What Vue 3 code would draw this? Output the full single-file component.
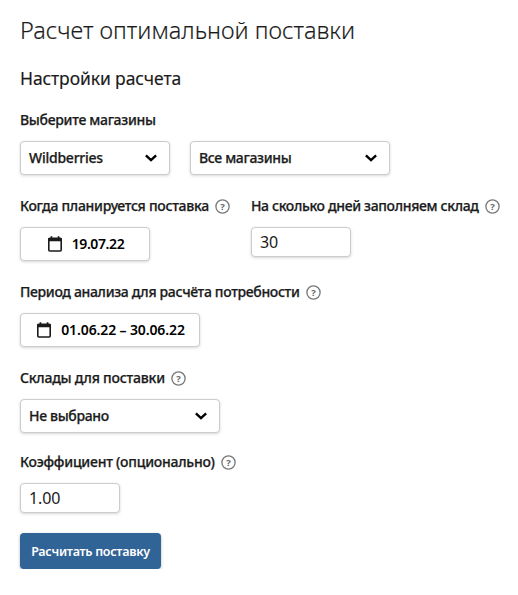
<script setup>
import { ref } from 'vue';

const dias = ref('30');
const coeficiente = ref('1.00');
</script>

<template>
  <main class="page">
    <h1>Расчет оптимальной поставки</h1>
    <h2>Настройки расчета</h2>

    <form @submit.prevent>
      <div class="row">
        <div class="field">
          <div class="label"><span class="t-shops">Выберите магазины</span></div>
          <div class="selects">
            <button type="button" class="control select w150">
              <span class="t-wb">Wildberries</span>
              <svg class="chevron" viewBox="0 0 12 8"><path d="M.9 1.3 6 6.1l5.1-4.8" /></svg>
            </button>
            <button type="button" class="control select w200">
              <span class="t-all">Все магазины</span>
              <svg class="chevron" viewBox="0 0 12 8"><path d="M.9 1.3 6 6.1l5.1-4.8" /></svg>
            </button>
          </div>
        </div>
      </div>

      <div class="row">
        <div class="field">
          <div class="label">
            <span class="t-when">Когда планируется поставка</span>
            <svg class="help" viewBox="0 0 15 15"><circle cx="7.5" cy="7.5" r="6.6" /><text x="7.5" y="10.8">?</text></svg>
          </div>
          <button type="button" class="control date w130">
            <svg class="calendar" viewBox="0 0 14 16"><rect x=".8" y="2.4" width="12.4" height="12.6" rx="1" /><path class="top" d="M.2 2h13.6v3.2H.2zM2.6.3h1.7V3H2.6zM9.7.3h1.7V3H9.7z" /></svg>
            <span class="t-day">19.07.22</span>
          </button>
        </div>
        <div class="field">
          <div class="label">
            <span class="t-days">На сколько дней заполняем склад</span>
            <svg class="help" viewBox="0 0 15 15"><circle cx="7.5" cy="7.5" r="6.6" /><text x="7.5" y="10.8">?</text></svg>
          </div>
          <input v-model="dias" class="control">
        </div>
      </div>

      <div class="row">
        <div class="field">
          <div class="label">
            <span class="t-period">Период анализа для расчёта потребности</span>
            <svg class="help" viewBox="0 0 15 15"><circle cx="7.5" cy="7.5" r="6.6" /><text x="7.5" y="10.8">?</text></svg>
          </div>
          <button type="button" class="control date w180">
            <svg class="calendar" viewBox="0 0 14 16"><rect x=".8" y="2.4" width="12.4" height="12.6" rx="1" /><path class="top" d="M.2 2h13.6v3.2H.2zM2.6.3h1.7V3H2.6zM9.7.3h1.7V3H9.7z" /></svg>
            <span class="t-range">01.06.22 – 30.06.22</span>
          </button>
        </div>
      </div>

      <div class="row stock">
        <div class="field">
          <div class="label">
            <span class="t-stock">Склады для поставки</span>
            <svg class="help" viewBox="0 0 15 15"><circle cx="7.5" cy="7.5" r="6.6" /><text x="7.5" y="10.8">?</text></svg>
          </div>
          <button type="button" class="control select w200">
            <span class="t-none">Не выбрано</span>
            <svg class="chevron" viewBox="0 0 12 8"><path d="M.9 1.3 6 6.1l5.1-4.8" /></svg>
          </button>
        </div>
      </div>

      <div class="row">
        <div class="field">
          <div class="label">
            <span class="t-coef">Коэффициент (опционально)</span>
            <svg class="help" viewBox="0 0 15 15"><circle cx="7.5" cy="7.5" r="6.6" /><text x="7.5" y="10.8">?</text></svg>
          </div>
          <input v-model="coeficiente" class="control">
        </div>
      </div>

      <button type="submit" class="submit">Расчитать поставку</button>
    </form>
  </main>
</template>

<style>
body {
  background: #fff;
}
</style>

<style scoped>
* {
  box-sizing: border-box;
}

.page {
  padding: 14px 0 0 20px;
  font-family: 'Noto Sans', 'Open Sans', sans-serif;
  color: #1b1b1b;
  white-space: nowrap;
}

h1 {
  margin: 0;
  font-size: 23.5px;
  line-height: 32px;
  font-weight: 300;
  -webkit-text-stroke: 0.15px;
}

h2 {
  margin: 17px 0 0;
  font-size: 17.5px;
  line-height: 30px;
  font-weight: 400;
  letter-spacing: -0.1px;
  -webkit-text-stroke: 0.15px;
}

form {
  margin-top: 16px;
}

.row {
  display: flex;
  gap: 21px;
  margin-bottom: 20px;
}

.row.stock {
  margin-bottom: 18px;
}

.label {
  display: flex;
  align-items: center;
  height: 22px;
  margin-bottom: 10px;
  padding-bottom: 1px;
  font-size: 14px;
  font-weight: 500;
  -webkit-text-stroke: 0.25px;
}

.t-shops { letter-spacing: -0.31px; }
.t-period,
.t-days { letter-spacing: -0.34px; }
.t-when { letter-spacing: -0.28px; }
.t-coef { letter-spacing: -0.25px; }
.t-stock { letter-spacing: -0.22px; }
.t-wb { letter-spacing: -0.25px; }
.t-all,
.t-none { letter-spacing: -0.34px; }
.t-day { letter-spacing: -0.38px; }
.t-range { letter-spacing: -0.12px; }

.selects {
  display: flex;
  gap: 20px;
}

/* Botones e inputs */
.control {
  display: flex;
  align-items: center;
  height: 34px;
  padding: 0 8px 1px;
  background: #fff;
  border: 1px solid #ccc;
  border-radius: 4px;
  box-shadow: 0 1px 3px rgba(0, 0, 0, 0.16);
  font-family: inherit;
  font-size: 14px;
  font-weight: 500;
  color: #1b1b1b;
}

.select {
  justify-content: space-between;
  padding-right: 12px;
  -webkit-text-stroke: 0.25px;
}

.date {
  justify-content: center;
  gap: 10px;
  padding-left: 10px;
  color: #000;
  font-weight: 600;
}

.w130 { width: 130px; }
.w150 { width: 150px; }
.w180 { width: 180px; }
.w200 { width: 200px; }

input.control {
  display: block;
  width: 100px;
  height: 30px;
  font-size: 16px;
  font-weight: 400;
  letter-spacing: -0.1px;
  outline: none;
}

.chevron {
  flex: none;
  width: 12px;
  height: 8px;
  fill: none;
  stroke: #000;
  stroke-width: 2.4;
}

.calendar {
  flex: none;
  width: 14px;
  height: 16px;
  fill: none;
  stroke: #1b1b1b;
  stroke-width: 1.6;
}

.calendar .top {
  fill: #1b1b1b;
  stroke: none;
}

.help {
  flex: none;
  width: 15px;
  height: 15px;
  margin: 1px 0 0 6px;
}

.help circle {
  fill: none;
  stroke: #777;
  stroke-width: 1.3;
}

.help text {
  fill: #666;
  font-size: 9.5px;
  font-weight: 700;
  text-anchor: middle;
  -webkit-text-stroke: 0;
}

.submit {
  display: flex;
  align-items: center;
  justify-content: center;
  width: 141px;
  height: 36px;
  padding: 0;
  background: #306396;
  border: 0;
  border-radius: 4px;
  box-shadow: 0 1px 3px rgba(0, 0, 0, 0.3);
  font-family: inherit;
  font-size: 12.5px;
  font-weight: 600;
  letter-spacing: -0.28px;
  color: #fff;
}
</style>
